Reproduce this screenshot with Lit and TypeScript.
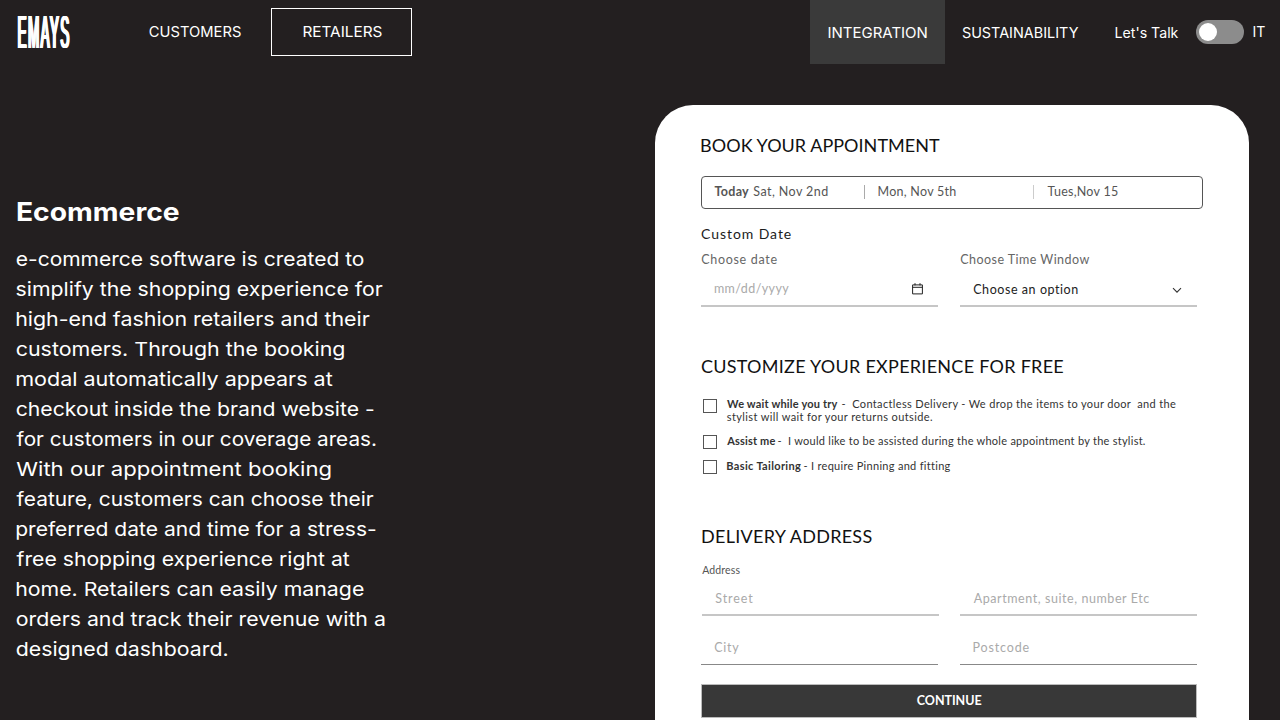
import { LitElement, html, css, svg } from "lit";
import { customElement, property, query } from "lit/decorators.js";

/** One line of text, fitted to a width by tracking or by horizontal scaling. */
@customElement("fit-text")
class FitText extends LitElement {
  @property({ type: Number }) w = 100;
  @property() mode: "track" | "scale" = "track";
  @property() text = "";
  @query(".run") run!: HTMLSpanElement;

  static styles = css`
    :host { display: block; flex: none; }
    .run { display: inline-block; white-space: pre; transform-origin: 0 0; vertical-align: top; }
  `;

  updated() {
    this.style.width = this.w + "px";
    const cs = getComputedStyle(this.run);
    const ctx = document.createElement("canvas").getContext("2d")!;
    // Measured at ten times the size, since bounding boxes come in whole pixels.
    ctx.font = `${cs.fontWeight} ${parseFloat(cs.fontSize) * 10}px ${cs.fontFamily}`;
    const m = ctx.measureText(this.text);
    const left = m.actualBoundingBoxLeft / 10;
    const gaps = this.text.length - 1;
    const ink = left + m.actualBoundingBoxRight / 10;
    // Antialiased edges spill about half a pixel on either side.
    const edge = 0.7;
    const target = this.w - 1;
    if (this.mode === "scale") {
      const k = target / (ink + (parseFloat(cs.letterSpacing) || 0) * gaps);
      this.run.style.transform = `translateX(${left * k + edge}px) scaleX(${k})`;
    } else {
      this.run.style.letterSpacing = (target - ink) / gaps + "px";
      this.run.style.marginLeft = left + edge + "px";
    }
  }

  render() {
    return html`<span class="run">${this.text}</span>`;
  }
}

const COPY: [string, number][] = [
  ["e-commerce software is created to", 348],
  ["simplify the shopping experience for", 367],
  ["high-end fashion retailers and their", 354],
  ["customers. Through the booking", 328.5],
  ["modal automatically appears at", 317],
  ["checkout inside the brand website -", 358],
  ["for customers in our coverage areas.", 360],
  ["With our appointment booking", 315],
  ["feature, customers can choose their", 358],
  ["preferred date and time for a stress-", 360],
  ["free shopping experience right at", 334],
  ["home. Retailers can easily manage", 348],
  ["orders and track their revenue with a", 369],
  ["designed dashboard.", 211.5],
];

const t = (text: string, w: number, cls = "") =>
  html`<fit-text class=${cls} .text=${text} .w=${w}></fit-text>`;
const s = (text: string, w: number, cls = "") =>
  html`<fit-text class=${cls} mode="scale" .text=${text} .w=${w}></fit-text>`;

@customElement("site-header")
class SiteHeader extends LitElement {
  static styles = css`
    :host { display: flex; height: 64px; font: 400 14.2px/20px Inter, sans-serif; color: #fff; box-sizing: border-box; padding-left: 18px; }
    .logo { width: 52px; margin-top: 6px; height: 52px; font: 400 46px/52px "Liberation Sans", Arial, sans-serif; letter-spacing: 5px; text-shadow: 1.5px 0 #fff, -1.5px 0 #fff, 3px 0 #fff, -3px 0 #fff; }
    .customers { margin: 22px 0 0 80px; }
    .retailers { margin: 8px 0 0 30px; box-sizing: border-box; width: 141px; height: 48px; border: 1px solid #fff; padding: 13px 0 0 31px; }
    .right { margin-left: auto; display: flex; }
    .integration { width: 117px; height: 41px; padding: 23px 0 0 18px; background: #3a3a3a; }
    .sustain { margin: 23px 0 0 17px; }
    .talk { margin: 23px 0 0 36px; }
    .toggle { margin: 20px 0 0 18px; width: 45px; height: 18px; padding: 3px 0 3px 3px; border-radius: 12px; background: #8c8c8c; }
    .knob { width: 18px; height: 18px; border-radius: 50%; background: #fff; }
    .lang { margin: 22px 15px 0 9px; }
  `;
  render() {
    return html`
      ${s("EMAYS", 51, "logo")}
      ${s("CUSTOMERS", 92, "customers")}
      <div class="retailers">${s("RETAILERS", 79)}</div>
      <div class="right">
        <div class="integration">${s("INTEGRATION", 99)}</div>
        ${s("SUSTAINABILITY", 116.5, "sustain")}
        ${s("Let's Talk", 63.5, "talk")}
        <div class="toggle"><div class="knob"></div></div>
        ${s("IT", 12, "lang")}
      </div>`;
  }
}

@customElement("booking-card")
class BookingCard extends LitElement {
  static styles = css`
    :host { display: block; box-sizing: border-box; width: 594px; height: 640px; padding: 30px 0 0 46px; border-radius: 38px 38px 0 0; background: #fff; font: 12.5px/20px Lato, sans-serif; color: #555; }
    .title { font-size: 18px; color: #111; }
    .dates { display: flex; box-sizing: border-box; width: 502px; height: 33px; margin-top: 21px; border: 1px solid #555; border-radius: 4px; padding: 5px 0 0 12px; }
    .today { font-weight: 700; margin-right: 4px; }
    .bar { width: 1px; height: 14px; margin: 3px 13px 0 0; background: #aaa; }
    .b1 { margin-left: 36px; }
    .b2 { margin-left: 77px; background: #ccc; }
    .custom { font-size: 14px; color: #1c1c1c; margin-top: 15px; }
    .pair { display: grid; grid-template-columns: 237px 237px; column-gap: 22px; }
    .labels { margin-top: 6px; margin-bottom: -1px; color: #666; }
    .field { display: flex; justify-content: space-between; box-sizing: border-box; height: 38px; padding: 10px 15px 0 13px; border-bottom: 2px solid #c6c6c6; color: #aaa; }
    .select { color: #222; padding-top: 11px; }
    .cal { width: 11px; height: 12px; margin-top: 4px; }
    .chev { width: 10px; height: 7px; margin-top: 7px; }
    .customize { margin-top: 49px; }
    .option { display: flex; font-size: 11px; line-height: 13px; color: #333; }
    .first { margin-top: 21px; }
    .second { margin-top: 11px; }
    .third { margin-top: 10px; }
    .box { width: 12px; height: 12px; border: 1px solid #555; margin: 1px 9px 0 2.4px; }
    .first .box { margin-top: 2px; }
    .line { display: flex; }
    .strong { font-weight: 700; margin-right: 3px; }
    .narrow { margin-right: 2px; }
    .delivery { margin-top: 52px; }
    .address { font-size: 10.5px; margin: 14px 0 0 0.5px; }
    .street { height: 36px; padding-top: 9px; }
    .city { height: 49px; padding-top: 22px; border-bottom: 1px solid #888; }
    .inset { margin-left: 1px; margin-right: -1px; }
    .cta { display: flex; justify-content: center; box-sizing: border-box; width: 494px; height: 32px; margin: 20px 0 0 1px; padding-top: 6px; background: #383838; box-shadow: 0 0 0 1px #bbb; color: #fff; font-weight: 700; }
  `;
  render() {
    return html`
      ${t("BOOK YOUR APPOINTMENT", 240, "title")}
      <div class="dates">
        ${t("Today", 35, "today")}${t("Sat, Nov 2nd", 75)}
        <div class="bar b1"></div>${t("Mon, Nov 5th", 78)}
        <div class="bar b2"></div>${t("Tues,Nov 15", 71)}
      </div>
      ${t("Custom Date", 90, "custom")}
      <div class="pair labels">${t("Choose date", 76)}${t("Choose Time Window", 130)}</div>
      <div class="pair">
        <div class="field">
          ${t("mm/dd/yyyy", 75)}
          <svg class="cal" viewBox="0 0 11 12" fill="none" stroke="#222">
            ${svg`<path d="M.6 1.9h9.8v9H.6zM.6 4.3h9.8M3 .2v2.2M8 .2v2.2" />`}
          </svg>
        </div>
        <div class="field select">
          ${t("Choose an option", 105)}
          <svg class="chev" viewBox="0 0 10 7" fill="none" stroke="#333" stroke-width="1.1">
            ${svg`<path d="M1 1.2l4 4 4-4" />`}
          </svg>
        </div>
      </div>
      ${t("CUSTOMIZE YOUR EXPERIENCE FOR FREE", 363, "title customize")}
      <div class="option first">
        <div class="box"></div>
        <div>
          <div class="line">${t("We wait while you try", 112, "strong")}${t("-  Contactless Delivery - We drop the items to your door  and the", 335.5)}</div>
          ${t("stylist will wait for your returns outside.", 207)}
        </div>
      </div>
      <div class="option second">
        <div class="box"></div>
        ${t("Assist me", 49, "strong narrow")}${t("-  I would like to be assisted during the whole appointment by the stylist.", 368.5)}
      </div>
      <div class="option third">
        <div class="box"></div>
        ${t("Basic Tailoring", 75, "strong narrow")}${t("- I require Pinning and fitting", 146.5)}
      </div>
      ${t("DELIVERY ADDRESS", 171, "title delivery inset")}
      ${t("Address", 38.5, "address")}
      <div class="pair">
        <div class="field street inset">${t("Street", 38)}</div>
        <div class="field street">${t("Apartment, suite, number Etc", 176.5)}</div>
        <div class="field city">${t("City", 25)}</div>
        <div class="field city">${t("Postcode", 56)}</div>
      </div>
      <div class="cta">${t("CONTINUE", 65)}</div>`;
  }
}

@customElement("app-root")
class AppRoot extends LitElement {
  static styles = css`
    :host { display: block; width: 1280px; height: 720px; overflow: hidden; background: #231f20; color: #fff; }
    .main { display: flex; justify-content: space-between; padding: 41px 31px 0 16px; }
    .copy { padding-top: 90px; font: 400 19.3px/30px Inter, sans-serif; }
    .heading { font-size: 25.5px; font-weight: 700; line-height: 34px; margin: 0 0 15px 1px; }
  `;
  render() {
    return html`
      <site-header></site-header>
      <div class="main">
        <div class="copy">
          ${s("Ecommerce", 162, "heading")}
          ${COPY.map(([line, w]) => s(line, w))}
        </div>
        <booking-card></booking-card>
      </div>`;
  }
}
